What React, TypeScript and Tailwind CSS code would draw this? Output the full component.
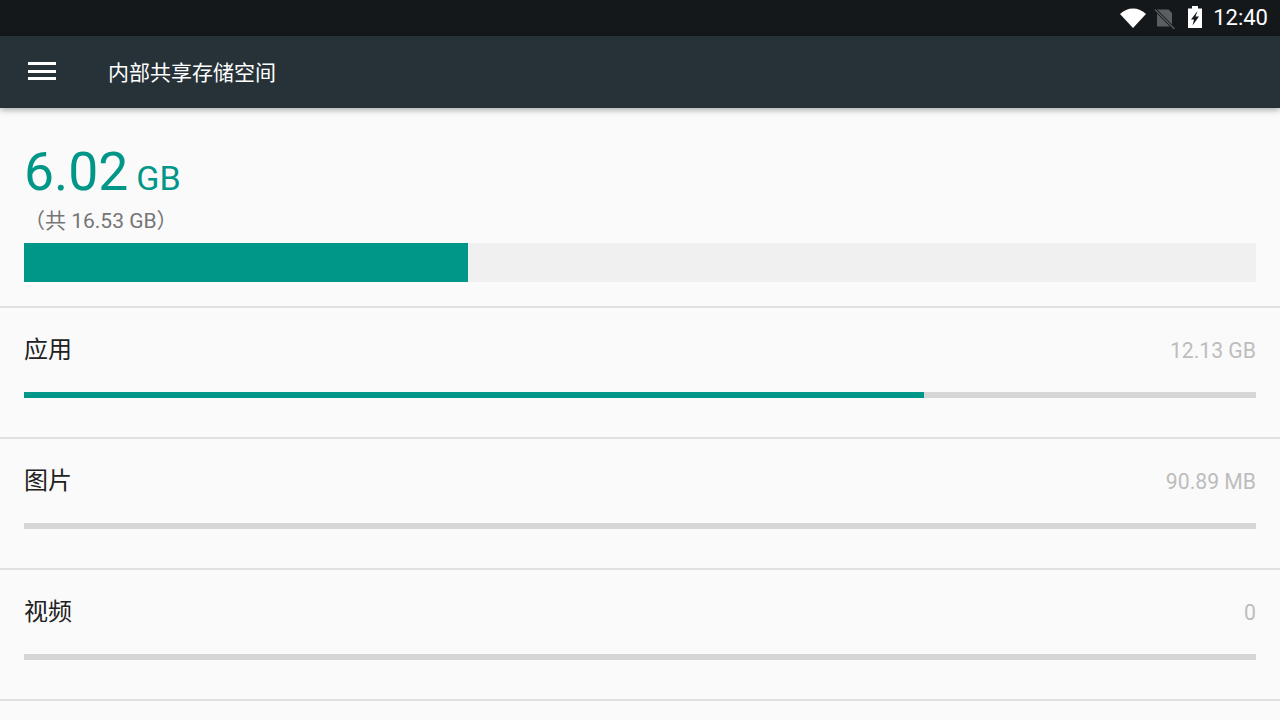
import React from "react";

const rows = [
  { label: "应用", size: "12.13 GB", pct: 73.05 },
  { label: "图片", size: "90.89 MB", pct: 0 },
  { label: "视频", size: "0", pct: 0 },
];

function StatusIcons() {
  return (
    <div className="flex items-center">
      <svg width="26" height="20" viewBox="0 0 26 20" className="mr-[8px]">
        <path d="M0 6 C7 -1.5 19 -1.5 26 6 L13 20 Z" fill="#ffffff" />
      </svg>
      <svg width="21" height="21" viewBox="0 0 21 21" className="mr-[13px]">
        <path d="M3 1.5 H14.5 L18 5 V18.5 H3 Z" fill="#5a5e60" />
        <path d="M0.5 1 L20 20.5" stroke="#14181b" strokeWidth="3" />
        <path d="M1 1.5 L20.5 21" stroke="#5a5e60" strokeWidth="1.3" />
      </svg>
      <svg width="14" height="22" viewBox="0 0 14 22" className="mr-[11px] mb-[2px]">
        <path d="M4 0 H10 V2.5 H14 V22 H0 V2.5 H4 Z" fill="#ffffff" />
        <path d="M9.5 5 L3 13.5 H6 L4.5 19.5 L11 10.5 H7.5 Z" fill="#14181b" />
      </svg>
    </div>
  );
}

export default function App() {
  return (
    <div className="w-[1280px] h-[720px] overflow-hidden bg-[#fafafa] flex flex-col font-['Roboto','Noto_Sans_CJK_SC',sans-serif]">
      <div className="h-[36px] shrink-0 bg-[#14181b] flex items-center justify-end pr-3">
        <StatusIcons />
        <span className="text-[22px] leading-none text-white">12:40</span>
      </div>

      <div className="h-[72px] shrink-0 bg-[#263238] flex items-center shadow-[0_2px_6px_rgba(0,0,0,0.32)] relative">
        <div className="ml-[28px] w-[28px] h-[18px] flex flex-col justify-between mb-[2px]">
          <div className="h-[3px] bg-white" />
          <div className="h-[3px] bg-white" />
          <div className="h-[3px] bg-white" />
        </div>
        <span className="ml-[52px] mt-[2px] text-[21px] leading-none text-white">内部共享存储空间</span>
      </div>

      <div className="h-[200px] shrink-0 px-[24px] border-b-2 border-[#e0e0e0] flex flex-col">
        <div className="mt-[35px] h-[58px] flex items-baseline text-[#009688]">
          <span className="text-[53.5px] leading-[58px]">6.02</span>
          <span className="ml-[8px] text-[34px] leading-none">GB</span>
        </div>
        <div className="mt-[8px] h-[24px] text-[21px] leading-[24px] text-[#757575]">（共 16.53 GB）</div>
        <div className="mt-[10px] h-[39px] bg-[#f0f0f0]">
          <div className="h-full w-[444px] bg-[#009688]" />
        </div>
      </div>

      {rows.map((row) => (
        <div key={row.label} className="h-[131px] shrink-0 px-[24px] border-b-2 border-[#e0e0e0] flex flex-col">
          <div className="mt-[27px] h-[30px] flex items-center justify-between">
            <span className="text-[24px] leading-none text-[#212121]">{row.label}</span>
            <span className="mt-[2px] text-[21.2px] leading-none text-[#bdbdbd]">{row.size}</span>
          </div>
          <div className="mt-[27px] h-[6px] bg-[#d6d6d6]">
            <div className="h-full bg-[#009688]" style={{ width: `${row.pct}%` }} />
          </div>
        </div>
      ))}
    </div>
  );
}
